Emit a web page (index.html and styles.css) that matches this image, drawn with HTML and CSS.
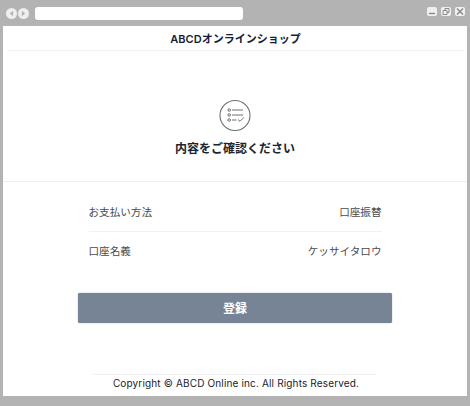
FILE: index.html
```html
<!DOCTYPE html>
<html lang="ja">
<head>
  <meta charset="UTF-8"/>
  <title>ABCDオンラインショップ</title>
  <link rel="stylesheet" href="styles.css">
</head>
<body>
  <div class="window">
    <div class="titlebar">
      <div class="nav-btns">
        <span class="nav-btn"><svg viewBox="0 0 10 10"><path d="M6.500 2.500 3.500 5l3 2.500z" fill="#b3b3b3"/></svg></span>
        <span class="nav-btn"><svg viewBox="0 0 10 10"><path d="M3.500 2.500 6.500 5l-3 2.500z" fill="#b3b3b3"/></svg></span>
      </div>
      <div class="address"></div>
      <div class="win-btns">
        <span class="win-btn"><svg viewBox="0 0 10 9"><path d="M2 6.500h6" stroke="#8a8a8a" stroke-width="1.400"/></svg></span>
        <span class="win-btn"><svg viewBox="0 0 10 9"><path d="M2 3.500h4v4h-4zM4 3.500v-2h4v4h-2" fill="none" stroke="#8a8a8a"/></svg></span>
        <span class="win-btn"><svg viewBox="0 0 10 9"><path d="m2 1.500 6 6m0-6-6 6" stroke="#8a8a8a" stroke-width="1.500"/></svg></span>
      </div>
    </div>

    <main class="page">
      <header class="shop-header">ABCDオンラインショップ</header>

      <section class="intro">
        <svg class="intro-icon" viewBox="0 0 32 32" fill="none" stroke="#6f6f6f">
          <circle cx="16" cy="16.500" r="15" stroke-width="1.100"/>
          <circle cx="10.200" cy="11" r="1.300"/>
          <circle cx="10.200" cy="16" r="1.300"/>
          <circle cx="10.200" cy="21" r="1.300"/>
          <path d="M13 11h11M13 16h11M13 21h4.500M19 20.500l2 1.800 3.800-3.800"/>
        </svg>
        <h1>内容をご確認ください</h1>
      </section>

      <section class="details">
        <div class="row"><span>お支払い方法</span><span>口座振替</span></div>
        <div class="row"><span>口座名義</span><span>ケッサイタロウ</span></div>
        <button class="submit">登録</button>
      </section>

      <footer class="copyright">Copyright © ABCD Online inc. All Rights Reserved.</footer>
    </main>
  </div>
</body>
</html>
```

FILE: styles.css
```css
* { box-sizing:border-box; margin:0; padding:0 }
html, body {
  width:470px;
  height:406px;
  overflow:hidden;
  background:#b3b3b3;
  font-family:Inter,'Noto Sans CJK JP',sans-serif;
  color:#1f2433;
}

/* WINDOW CHROME */
.window {
  height:100%;
  display:flex;
  flex-direction:column;
}
.titlebar {
  height:26px;
  flex:none;
  display:flex;
  align-items:center;
  padding:1px 3px 0 6px;
}
.nav-btns { display:flex; gap:1px; width:29px; flex:none }
.nav-btn {
  width:11px;
  height:11px;
  border-radius:50%;
  background:#eee;
  display:block;
}
.nav-btn svg, .win-btn svg { display:block; width:100%; height:100% }
.address {
  width:208px;
  height:13px;
  flex:none;
  background:#fff;
  border-radius:3px;
}
.win-btns { display:flex; gap:4px; margin:-5px 2px 0 auto }
.win-btn {
  width:10px;
  height:9px;
  background:#f0f0f0;
  border-radius:2px;
  display:block;
}

/* PAGE */
.page {
  flex:1;
  margin:0 3px 10px;
  background:#fff;
  display:flex;
  flex-direction:column;
  align-items:center;
  min-height:0;
}
.shop-header {
  width:457px;
  height:25px;
  flex:none;
  border-bottom:1px solid #f1f2f6;
  text-align:center;
  font-size:11px;
  font-weight:600;
  line-height:27px;
  padding-left:1px;
  color:#161d3a;
}

.intro {
  width:100%;
  height:131px;
  flex:none;
  border-bottom:1px solid #eeeef2;
  display:flex;
  flex-direction:column;
  align-items:center;
  padding-top:48px;
}
.intro-icon { width:32px; height:32px; display:block; overflow:visible }
.intro h1 {
  margin-top:8px;
  font-size:12px;
  font-weight:600;
  line-height:19px;
  color:#20242c;
}

.details {
  width:314px;
  flex:none;
  display:flex;
  flex-direction:column;
}
.row {
  width:293px;
  height:37px;
  padding-bottom:1px;
  margin:0 auto;
  display:flex;
  justify-content:space-between;
  align-items:center;
  font-size:10.600px;
  color:#4a4a4a;
}
.row:first-child { margin-top:11px; border-bottom:1px solid #f0f1f5; height:39px; padding-bottom:2px }
.submit {
  margin-top:24px;
  height:30px;
  padding-bottom:2px;
  border:none;
  border-radius:2px;
  background:#768496;
  box-shadow:0 0 1px #4f5b6b;
  color:#fff;
  font:600 12px Inter,'Noto Sans CJK JP',sans-serif;
}

.copyright {
  margin-top:auto;
  width:284px;
  height:22px;
  padding-left:2px;
  flex:none;
  border-top:1px solid #f1f1f4;
  text-align:center;
  font-size:10px;
  line-height:16px;
  letter-spacing:.15px;
  white-space:nowrap;
  color:#20242c;
}
```
